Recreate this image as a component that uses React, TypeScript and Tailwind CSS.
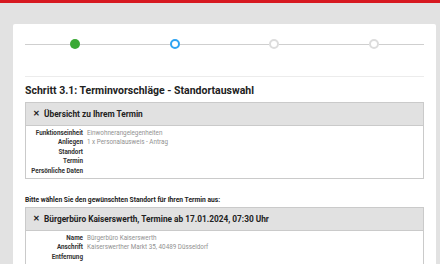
import React from "react";

const steps = ["done", "current", "todo", "todo"];

const Dot = ({ state }: { state: string }) => {
  if (state === "done") return <div className="w-[10px] h-[10px] rounded-full bg-[#3aa935] shrink-0" />;
  if (state === "current")
    return <div className="w-[10px] h-[10px] rounded-full border-2 border-[#2ea3f2] bg-white shrink-0" />;
  return <div className="w-[10px] h-[10px] rounded-full border-2 border-[#dcdcdc] bg-white shrink-0" />;
};

const Row = ({ label, value }: { label: string; value?: string }) => (
  <div className="flex h-[9.5px] items-center">
    <div className="w-[61px] text-right font-bold text-[#333] pr-[4px] shrink-0">{label}</div>
    <div className="text-[#919191]">{value}</div>
  </div>
);

const Box = ({ title, rows }: { title: string; rows: [string, string?][] }) => (
  <div className="border border-[#cacaca]">
    <div className="h-[23px] bg-[#e1e1e1] border-b border-[#cacaca] flex items-center px-[7px] text-[8.3px] font-bold text-[#222]">
      <span className="mr-[4px] text-[8px]">✕</span>
      {title}
    </div>
    <div className="pt-[2.5px] pb-[2px] text-[6.3px] leading-[9.5px]">
      {rows.map(([l, v]) => (
        <Row key={l} label={l} value={v} />
      ))}
    </div>
  </div>
);

export default function App() {
  return (
    <div
      className="w-[440px] h-[264px] overflow-hidden bg-[#e2e2e2]"
      style={{ fontFamily: "Roboto, 'Liberation Sans', sans-serif" }}
    >
      <div className="h-[3px] bg-[#d71920]" />
      <div className="mt-[21px] ml-[13px] w-[423px] h-[300px] bg-white rounded-[2px] px-[12px] pt-[14px]">
        <div className="grid grid-cols-4 h-[12px]">
          {steps.map((s, i) => (
            <div key={i} className="flex items-center">
              <div className="flex-1 h-px bg-[#cfcfcf]" />
              <Dot state={s} />
              <div className="flex-1 h-px bg-[#cfcfcf]" />
            </div>
          ))}
        </div>
        <div className="mt-[26px] border-t border-[#ececec]" />
        <h1 className="mt-[7px] mb-[4px] text-[10.5px] leading-[14px] font-bold text-[#222]">
          Schritt 3.1: Terminvorschläge - Standortauswahl
        </h1>
        <Box
          title="Übersicht zu Ihrem Termin"
          rows={[
            ["Funktionseinheit", "Einwohnerangelegenheiten"],
            ["Anliegen", "1 x Personalausweis - Antrag"],
            ["Standort"],
            ["Termin"],
            ["Persönliche Daten"],
          ]}
        />
        <p className="mt-[15px] mb-[1px] text-[6.7px] leading-[12px] font-bold text-[#222]">
          Bitte wählen Sie den gewünschten Standort für Ihren Termin aus:
        </p>
        <Box
          title="Bürgerbüro Kaiserswerth, Termine ab 17.01.2024, 07:30 Uhr"
          rows={[
            ["Name", "Bürgerbüro Kaiserswerth"],
            ["Anschrift", "Kaiserswerther Markt 35, 40489 Düsseldorf"],
            ["Entfernung"],
            [""],
          ]}
        />
      </div>
    </div>
  );
}
